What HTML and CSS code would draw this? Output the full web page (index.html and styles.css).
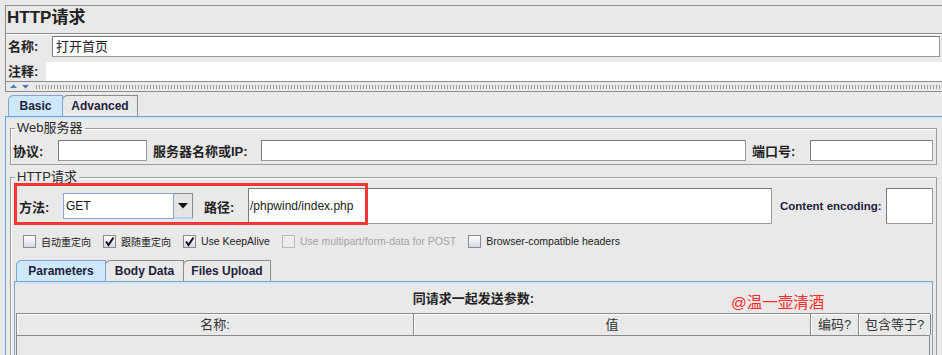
FILE: index.html
```html
<!DOCTYPE html>
<html>
  <head>
    <title>HTTP请求</title>
    <link rel="stylesheet" href="styles.css">
  </head>
  <body>
    <div class="header">
      <div class="title">HTTP请求</div>
      <div class="name-row">
        <span class="label name-label">名称:</span>
        <div class="field name-field">打开首页</div>
      </div>
      <div class="comment-row">
        <span class="label comment-label">注释:</span>
        <div class="comment-field"></div>
      </div>
      <div class="divider">
        <svg class="arrows" width="22" height="6" viewBox="0 0 22 6">
          <path d="M1 4 L4.5 0.5 L8 4 Z" fill="#4a78b8"/>
          <path d="M13 1 L20 1 L16.5 4.5 Z" fill="#4a78b8"/>
        </svg>
        <div class="dots"></div>
      </div>
    </div>

    <div class="main">
      <div class="tabs">
        <div class="tab tab-active tab-basic">Basic</div>
        <div class="tab tab-adv">Advanced</div>
      </div>
      <div class="pane">
        <div class="pane-band"></div>

        <fieldset class="group web-group">
          <legend>Web服务器</legend>
          <div class="web-row">
            <span class="label proto-label">协议:</span>
            <div class="field proto-field"></div>
            <span class="label server-label">服务器名称或IP:</span>
            <div class="field server-field"></div>
            <span class="label port-label">端口号:</span>
            <div class="field port-field"></div>
          </div>
        </fieldset>

        <fieldset class="group http-group">
          <legend>HTTP请求</legend>
          <div class="mark"></div>
          <div class="method-row">
            <span class="label method-label">方法:</span>
            <div class="combo">
              <div class="combo-text">GET</div>
              <div class="combo-btn">
                <svg width="10" height="6" viewBox="0 0 10 6"><path d="M0 0 L10 0 L5 5.5 Z" fill="#111"/></svg>
              </div>
            </div>
            <span class="label path-label">路径:</span>
            <div class="field path-field">/phpwind/index.php</div>
            <span class="label enc-label">Content encoding:</span>
            <div class="field enc-field"></div>
          </div>

          <div class="checks">
            <div class="check"><span class="box"></span><span class="check-text cjk">自动重定向</span></div>
            <div class="check"><span class="box"><svg width="11" height="11" viewBox="0 0 11 11"><path d="M2 5.5 L4.5 9 L9.5 1.5" stroke="#111" stroke-width="2" fill="none"/></svg></span><span class="check-text cjk">跟随重定向</span></div>
            <div class="check"><span class="box"><svg width="11" height="11" viewBox="0 0 11 11"><path d="M2 5.5 L4.5 9 L9.5 1.5" stroke="#111" stroke-width="2" fill="none"/></svg></span><span class="check-text">Use KeepAlive</span></div>
            <div class="check disabled"><span class="box"></span><span class="check-text">Use multipart/form-data for POST</span></div>
            <div class="check"><span class="box"></span><span class="check-text">Browser-compatible headers</span></div>
          </div>

          <div class="subtabs">
            <div class="tab tab-active sub-params">Parameters</div>
            <div class="tab sub-body">Body Data</div>
            <div class="tab sub-files">Files Upload</div>
          </div>
          <div class="subpane">
            <div class="pane-band"></div>
            <div class="params-title">同请求一起发送参数:</div>
            <div class="watermark">@温一壶清酒</div>
            <div class="table">
              <div class="th">名称:</div>
              <div class="th">值</div>
              <div class="th">编码?</div>
              <div class="th">包含等于?</div>
            </div>
            <div class="table-body"></div>
          </div>
        </fieldset>
      </div>
    </div>
  </body>
</html>
```

FILE: styles.css
```css
html, body {
    padding: 0;
    margin: 0;
}

body {
    width: 942px;
    height: 355px;
    overflow: hidden;
    background: #e9e9e9;
    color: #222;
    font-family: "Liberation Sans", "Noto Sans CJK SC", sans-serif;
}

.label {
    font-weight: bold;
    font-size: 13px;
    white-space: nowrap;
    font-family: "Liberation Sans", "Noto Sans CJK SC", sans-serif;
}

.field {
    box-sizing: border-box;
    background: #fff;
    border: 1px solid #9a9a9a;
    border-top-color: #7a7a7a;
    border-left-color: #7a7a7a;
    height: 21px;
}

/* header */

.header {
    margin: 5px 0 0 5px;
    border-top: 1px solid #8d8d8d;
    border-left: 1px solid #8d8d8d;
}

.title {
    height: 27px;
    line-height: 23px;
    font-size: 17px;
    font-weight: bold;
    padding-left: 1px;
    border-bottom: 1px solid #8d8d8d;
    box-shadow: 0 1px 0 #fff;
}

.name-row {
    display: flex;
    align-items: flex-start;
    height: 22px;
    padding: 2px 0 0 2px;
}

.name-label {
    width: 44px;
    line-height: 21px;
}

.name-field {
    flex: 1;
    margin-right: 2px;
    font-size: 13px;
    line-height: 19px;
    padding-left: 3px;
}

.comment-row {
    display: flex;
    align-items: flex-start;
    padding: 4px 0 0 2px;
    height: 19px;
    border-bottom: 1px solid #8d8d8d;
}

.comment-label {
    width: 38px;
    line-height: 19px;
}

.comment-field {
    flex: 1;
    height: 19px;
    background: #fff;
}

.divider {
    display: flex;
    align-items: center;
    height: 9px;
    border-bottom: 1px solid #8d8d8d;
}

.arrows {
    margin-left: 3px;
    flex: none;
}

.dots {
    flex: 1;
    height: 4px;
    margin-left: 4px;
    background-image: radial-gradient(circle, #9a9a9a 0.7px, transparent 0.9px);
    background-size: 3px 2px;
}

/* tabs */

.main {
    margin-left: 5px;
    padding-top: 3px;
}

.tabs, .subtabs {
    display: flex;
    height: 21px;
}

.tabs {
    padding-left: 3px;
}

.tab {
    box-sizing: border-box;
    height: 21px;
    border: 1px solid #8c8c8c;
    border-bottom: none;
    border-top-left-radius: 6px 5px;
    font-size: 12px;
    font-weight: bold;
    color: #1e1e3c;
    line-height: 20px;
    text-align: center;
    white-space: nowrap;
    background: #e9e9e9;
}

.tab + .tab {
    margin-left: -1px;
}

.tab-active {
    background: #cde8fb;
    border-color: #7fa5cf;
    position: relative;
    z-index: 1;
}

.tab-basic {
    width: 55px;
}

.tab-adv {
    width: 76px;
}

.pane {
    border-top: 1px solid #6f9fd6;
    border-left: 1px solid #6f9fd6;
}

.pane-band {
    height: 2px;
    background: #cde8fb;
}

/* groups */

.group {
    margin: 2px 5px 0 4px;
    padding: 0;
    border: 1px solid #9c9c9c;
    box-shadow: inset 1px 1px 0 #fff;
    min-width: 0;
}

.group legend {
    margin-left: 4px;
    padding: 0 2px;
    font-size: 13px;
    line-height: 14px;
    color: #2a2a2a;
}

.web-row {
    display: flex;
    align-items: center;
    padding: 5px 3px 3px 2px;
}

.proto-label {
    width: 45px;
}

.proto-field {
    width: 89px;
}

.server-label {
    margin-left: 6px;
    width: 108px;
}

.server-field {
    flex: 1;
}

.port-label {
    margin-left: 6px;
    width: 58px;
}

.port-field {
    width: 123px;
}

.http-group {
    margin-top: 5px;
    border-bottom: none;
    position: relative;
}

.mark {
    position: absolute;
    left: 3px;
    top: -1px;
    width: 348px;
    height: 36px;
    border: 3px solid #ff3535;
    z-index: 2;
}

.method-row {
    display: flex;
    align-items: center;
    height: 36px;
    padding: 4px 3px 0 8px;
}

.method-label {
    width: 44px;
}

.combo {
    display: flex;
    width: 130px;
    height: 26px;
    box-sizing: border-box;
}

.combo-text {
    flex: 1;
    background: #fff;
    border: 1px solid #86a9d8;
    font-size: 12px;
    line-height: 24px;
    padding-left: 2px;
    color: #111;
}

.combo-btn {
    width: 19px;
    box-sizing: border-box;
    background: #e4e4e4;
    border: 1px solid #8c8c8c;
    border-left: none;
    border-bottom: 2px solid #b7d3f0;
    display: flex;
    align-items: center;
    justify-content: center;
}

.path-label {
    margin-left: 11px;
    width: 44px;
}

.path-field {
    flex: 1;
    height: 36px;
    font-size: 12px;
    line-height: 34px;
    padding-left: 1px;
}

.enc-label {
    margin-left: 8px;
    width: 106px;
    font-size: 11.5px;
    color: #1e1e3c;
}

.enc-field {
    width: 47px;
    height: 36px;
}

/* checkboxes */

.checks {
    display: flex;
    align-items: center;
    height: 14px;
    margin-top: 10px;
    padding-left: 12px;
}

.check {
    display: flex;
    align-items: center;
    margin-right: 12px;
}

.box {
    box-sizing: border-box;
    width: 13px;
    height: 13px;
    border: 1px solid #8a8a9c;
    background: linear-gradient(#ffffff, #d3dbe7);
    margin-right: 5px;
    display: flex;
    align-items: center;
    justify-content: center;
}

.check-text {
    font-size: 10.5px;
    color: #222;
}

.check-text.cjk {
    font-size: 10px;
}

.disabled .box {
    border-color: #b9b9b9;
    background: #ececec;
}

.disabled .check-text {
    color: #a3a3a3;
}

/* parameters */

.subtabs {
    margin: 12px 0 0 5px;
}

.sub-params {
    width: 90px;
}

.sub-body {
    width: 79px;
}

.sub-files {
    width: 88px;
}

.subpane {
    position: relative;
    margin: 0 3px 0 3px;
    border-top: 1px solid #7fa5cf;
    border-left: 1px solid #7fa5cf;
    border-right: 1px solid #7fa5cf;
    height: 80px;
}

.params-title {
    height: 29px;
    line-height: 29px;
    text-align: center;
    font-size: 13px;
    font-weight: bold;
}

.watermark {
    position: absolute;
    left: 716px;
    top: 8px;
    font-size: 15.5px;
    color: #ff2a2a;
    font-family: "Liberation Sans", "Noto Sans CJK SC", sans-serif;
}

.table {
    display: grid;
    grid-template-columns: 397px 397px 48px 72px;
    margin: 0 2px 0 1px;
    border-top: 1px solid #8a8a8a;
    border-bottom: 1px solid #8a8a8a;
    border-left: 1px solid #8a8a8a;
    height: 21px;
}

.th {
    box-sizing: border-box;
    border-right: 1px solid #8a8a8a;
    box-shadow: inset 1px 1px 0 #fff;
    text-align: center;
    font-size: 13px;
    line-height: 21px;
    color: #333;
}

.table-body {
    margin: 0 2px 0 1px;
    height: 30px;
    border-left: 1px solid #8a8a8a;
    border-right: 1px solid #8a8a8a;
}
```
